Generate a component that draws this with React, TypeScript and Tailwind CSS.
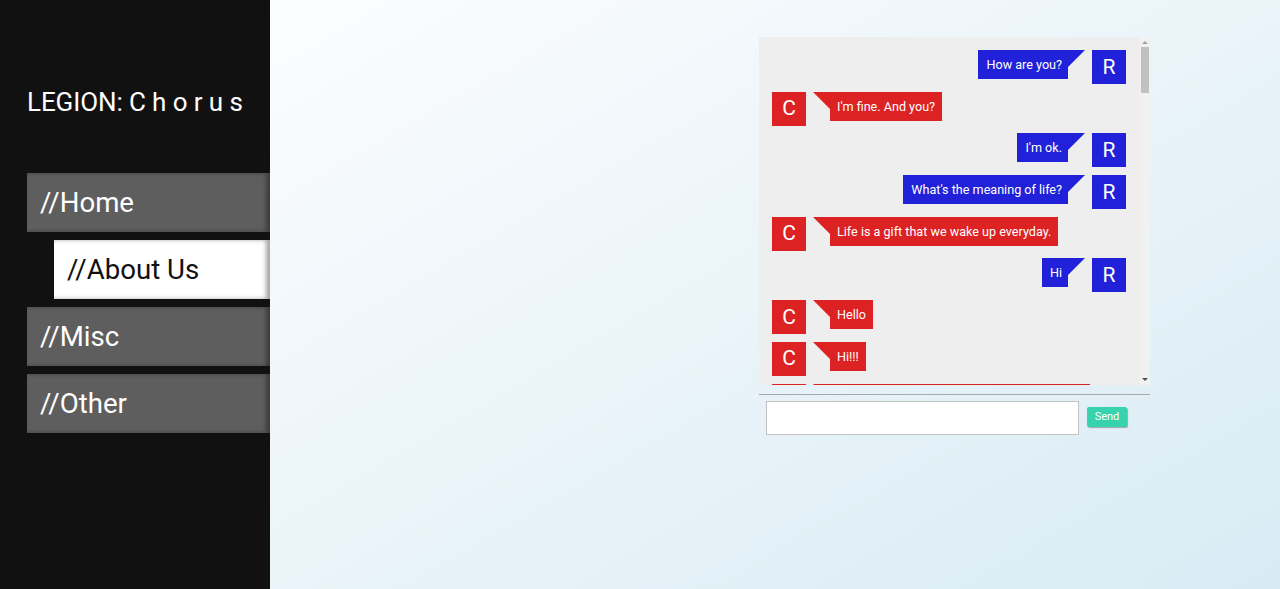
const messages = [
  { from: "R", text: "How are you?" },
  { from: "C", text: "I'm fine. And you?" },
  { from: "R", text: "I'm ok." },
  { from: "R", text: "What's the meaning of life?" },
  { from: "C", text: "Life is a gift that we wake up everyday." },
  { from: "R", text: "Hi" },
  { from: "C", text: "Hello" },
  { from: "C", text: "Hi!!!" },
];

const navItems = ["//Home", "//About Us", "//Misc", "//Other"];

function Avatar({ letter }: { letter: string }) {
  const bg = letter === "R" ? "bg-[#2121d9]" : "bg-[#dc2222]";
  return (
    <div
      className={`${bg} w-[34px] h-[34px] shrink-0 flex items-center justify-center text-white text-[21px] leading-none`}
    >
      {letter}
    </div>
  );
}

function Message({ from, text }: { from: string; text: string }) {
  if (from === "R") {
    return (
      <div className="flex items-start justify-end">
        <div className="h-[29px] bg-[#2121d9] text-white text-[12.6px] leading-[29px] pl-2 pr-[6px] whitespace-nowrap">
          {text}
        </div>
        <div className="w-0 h-0 border-t-[17px] border-t-[#2121d9] border-r-[17px] border-r-transparent" />
        <div className="w-[7px]" />
        <Avatar letter="R" />
      </div>
    );
  }
  return (
    <div className="flex items-start">
      <Avatar letter="C" />
      <div className="w-[7px]" />
      <div className="w-0 h-0 border-t-[17px] border-t-[#dc2222] border-l-[17px] border-l-transparent" />
      <div className="h-[29px] bg-[#dc2222] text-white text-[12.6px] leading-[29px] px-[7px] whitespace-nowrap">
        {text}
      </div>
    </div>
  );
}

export default function App() {
  return (
    <div
      className="flex w-full h-[589px] overflow-hidden"
      style={{ fontFamily: "Roboto, 'Noto Sans', sans-serif" }}
    >
      {/* Sidebar */}
      <aside className="w-[270px] shrink-0 bg-[#111111] pl-[27px] pt-[87px]">
        <div className="text-white text-[26px] leading-[30px] tracking-[-0.1px]">
          LEGION: C h o r u s
        </div>
        <nav className="mt-[56px] flex flex-col gap-2">
          {navItems.map((item, i) => (
            <div
              key={item}
              className={`h-[59px] flex items-center text-[27.6px] pl-[13px] shadow-[inset_-4px_0_4px_rgba(0,0,0,0.35)] ${
                i === 1
                  ? "ml-[27px] bg-white text-[#111]"
                  : "bg-[#5e5e5e] text-white"
              }`}
            >
              {item}
            </div>
          ))}
        </nav>
      </aside>

      {/* Main */}
      <main className="flex-1 bg-gradient-to-br from-[#fcfdfe] to-[#d8ebf4] pl-[489px] pt-[37px]">
        <div className="w-[391px]">
          <div className="flex h-[348px] bg-[#eeeeee]">
            <div className="flex-1 overflow-hidden pt-[13px] pl-[13px] pr-[14px] flex flex-col gap-[7.7px]">
              {messages.map((m, i) => (
                <Message key={i} from={m.from} text={m.text} />
              ))}
              {/* next message, only its top edge shows above the fold */}
              <div className="flex items-start shrink-0">
                <div className="w-[34px] h-[34px] bg-[#dc2222]" />
                <div className="w-[7px]" />
                <div className="w-0 h-0 border-t-[17px] border-t-[#dc2222] border-l-[17px] border-l-transparent" />
                <div className="w-[260px] h-[29px] bg-[#dc2222]" />
              </div>
            </div>
            {/* scrollbar */}
            <div className="w-[10px] bg-[#f1f1f1] flex flex-col items-center">
              <div className="mt-[4px] w-0 h-0 border-l-[3px] border-r-[3px] border-b-[3px] border-l-transparent border-r-transparent border-b-[#a3a3a3]" />
              <div className="mt-[3px] w-[8px] h-[46px] bg-[#c1c1c1]" />
              <div className="flex-1" />
              <div className="mb-[4px] w-0 h-0 border-l-[3px] border-r-[3px] border-t-[3px] border-l-transparent border-r-transparent border-t-[#505050]" />
            </div>
          </div>
          <div className="mt-[9px] h-px bg-[#a8a8a8]" />
          <div className="flex items-start pl-[7px] mt-[6px]">
            <div className="w-[313px] h-[34px] bg-white border border-[#c2c2c2]" />
            <button className="ml-[8px] mt-[6px] w-[40px] h-[20px] bg-[#36d3ae] rounded-[2px] text-white text-[11px] leading-[20px] shadow-[1px_1px_1px_rgba(0,0,0,0.3)]">
              Send
            </button>
          </div>
        </div>
      </main>
    </div>
  );
}
